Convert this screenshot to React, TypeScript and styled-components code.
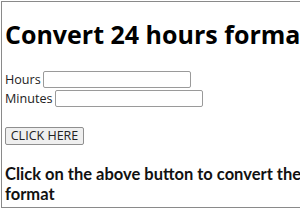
import React from 'react'
import styled, { createGlobalStyle } from 'styled-components';

const Global = createGlobalStyle`
body {
  margin: 0;
  background: #fff;
  font-family: "Open Sans", "Noto Sans", sans-serif;
  color: #000;
}
`;

const Frame = styled.div`
margin: 1px 0 0 1px;
width: 330px;
height: 205px;
border: 1px solid #8a8a8a;
border-right: none;
padding: 0 0 0 3px;
overflow: hidden;
white-space: nowrap;
`;

const H1 = styled.h1`
margin: 17px 0 21px 0;
font-size: 25px;
line-height: 30px;
font-weight: 700;
`;

const Row = styled.div`
display: flex;
align-items: center;
gap: 2px;
font-size: 12.6px;
line-height: 19px;
color: #222;
`;

const Label = styled.label`
`;

const Input = styled.input`
box-sizing: border-box;
width: 148px;
height: 17px;
margin: 0;
border: 1px solid #9a9a9a;
border-radius: 2px;
background: #fff;
`;

const Button = styled.button`
margin-top: 19px;
box-sizing: border-box;
width: 79px;
height: 18px;
padding: 0;
font-family: "Open Sans", "Noto Sans", sans-serif;
font-size: 12.5px;
line-height: 16px;
color: #222;
background: #efefef;
border: 1px solid #8f8f8f;
border-radius: 2px;
`;

const Note = styled.p`
margin: 19px 0 0 0;
font-family: Lato, "Open Sans", sans-serif;
font-size: 16.5px;
line-height: 20px;
font-weight: 700;
color: #111;
`;

function App() {
    return (
        <>
            <Global />
            <Frame>
                <H1>Convert 24 hours format</H1>
                <Row>
                    <Label>Hours</Label>
                    <Input type="text" />
                </Row>
                <Row>
                    <Label>Minutes</Label>
                    <Input type="text" />
                </Row>
                <Button>CLICK HERE</Button>
                <Note>
                    Click on the above button to convert the
                    <br />
                    format
                </Note>
            </Frame>
        </>
    )
}

export default App
